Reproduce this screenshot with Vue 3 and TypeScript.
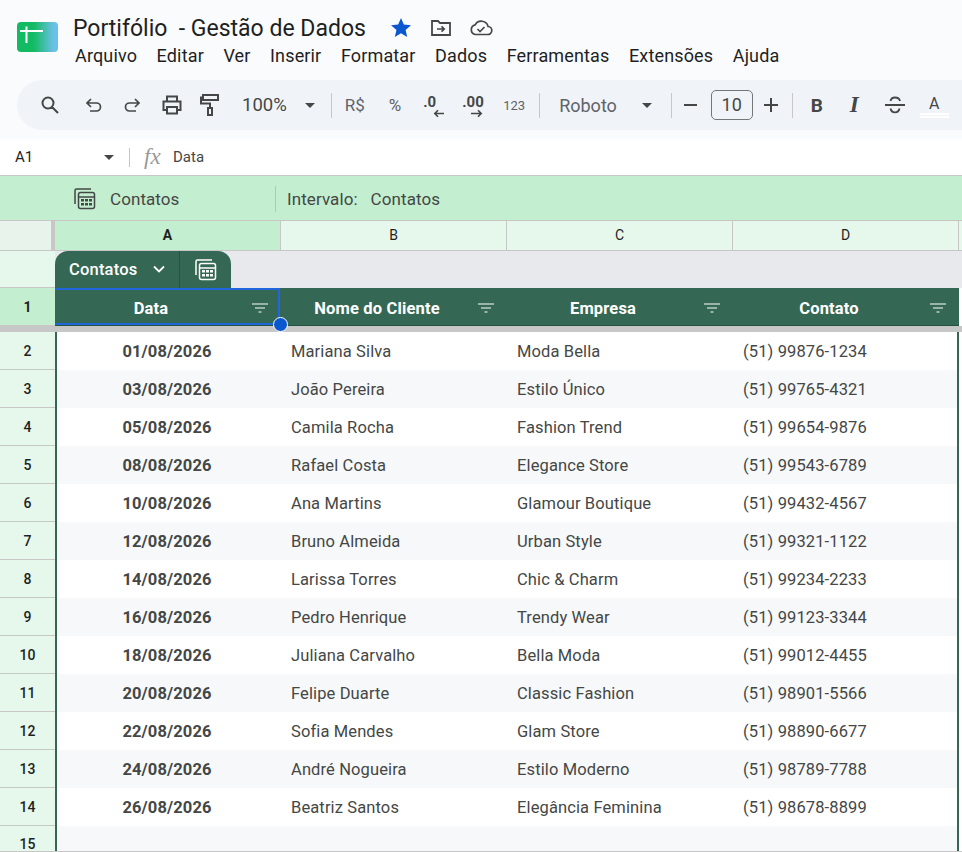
<script setup lang="ts">
const menus = ['Arquivo', 'Editar', 'Ver', 'Inserir', 'Formatar', 'Dados', 'Ferramentas', 'Extensões', 'Ajuda']
const columns = ['A', 'B', 'C', 'D']
const headers = ['Data', 'Nome do Cliente', 'Empresa', 'Contato']
const rows = [
  ['01/08/2026', 'Mariana Silva', 'Moda Bella', '(51) 99876-1234'],
  ['03/08/2026', 'João Pereira', 'Estilo Único', '(51) 99765-4321'],
  ['05/08/2026', 'Camila Rocha', 'Fashion Trend', '(51) 99654-9876'],
  ['08/08/2026', 'Rafael Costa', 'Elegance Store', '(51) 99543-6789'],
  ['10/08/2026', 'Ana Martins', 'Glamour Boutique', '(51) 99432-4567'],
  ['12/08/2026', 'Bruno Almeida', 'Urban Style', '(51) 99321-1122'],
  ['14/08/2026', 'Larissa Torres', 'Chic & Charm', '(51) 99234-2233'],
  ['16/08/2026', 'Pedro Henrique', 'Trendy Wear', '(51) 99123-3344'],
  ['18/08/2026', 'Juliana Carvalho', 'Bella Moda', '(51) 99012-4455'],
  ['20/08/2026', 'Felipe Duarte', 'Classic Fashion', '(51) 98901-5566'],
  ['22/08/2026', 'Sofia Mendes', 'Glam Store', '(51) 98890-6677'],
  ['24/08/2026', 'André Nogueira', 'Estilo Moderno', '(51) 98789-7788'],
  ['26/08/2026', 'Beatriz Santos', 'Elegância Feminina', '(51) 98678-8899'],
]
</script>

<template>
  <div class="page">
    <header class="top">
      <div class="title-row">
        <svg class="logo" width="42" height="30" viewBox="0 0 42 30">
          <defs>
            <linearGradient id="logoFill" x1="0" x2="1" y1="0" y2="0">
              <stop offset="0.4" stop-color="#12bb62" />
              <stop offset="0.9" stop-color="#6cc0e8" />
            </linearGradient>
          </defs>
          <rect x="0" y="0" width="41" height="30" rx="4" fill="url(#logoFill)" />
          <path d="M3 9h23M9.500 4.500V21" stroke="#fff" stroke-width="2" fill="none" />
        </svg>
        <div class="titles">
          <div class="name-line">
            <span class="doc-name">Portifólio&nbsp; - Gestão de Dados</span>
            <svg class="star" width="24" height="24" viewBox="0 0 24 24"><path fill="#0b57d0" d="M12 17.300l6.200 3.700-1.600-7L22 9.200l-7.200-.6L12 2 9.200 8.600 2 9.200 7.500 14l-1.700 7z" /></svg>
            <svg class="folder" width="22" height="20" viewBox="0 0 22 20"><path fill="none" stroke="#444746" stroke-width="1.800" d="M2 3h6l2 2h10v12H2z" /><path fill="none" stroke="#444746" stroke-width="1.600" d="M7 11h7M11.500 8.300l2.800 2.700-2.800 2.700" /></svg>
            <svg class="cloud" width="24" height="20" viewBox="0 0 24 20"><path fill="none" stroke="#444746" stroke-width="1.700" d="M6 16.500h12.500a4 4 0 0 0 .6-8A7 7 0 0 0 6.200 6.800 5 5 0 0 0 6 16.500z" /><path fill="none" stroke="#444746" stroke-width="1.600" d="M8.500 11l2.500 2.500 4.500-4.500" /></svg>
          </div>
          <nav class="menus">
            <span v-for="m in menus" :key="m">{{ m }}</span>
          </nav>
        </div>
      </div>
      <div class="toolbar">
        <svg class="ic s1" width="22" height="22" viewBox="0 0 22 22"><path fill="none" stroke="#444746" stroke-width="2" d="M9 3.500a5.500 5.500 0 1 0 0 11 5.500 5.500 0 0 0 0-11zM13 13l6 6" /></svg>
        <svg class="ic s2" width="20" height="20" viewBox="0 0 20 20"><path fill="none" stroke="#444746" stroke-width="1.700" d="M7 4L3 8l4 4M3 8h9.500a4 4 0 0 1 0 8H6" /></svg>
        <svg class="ic s3" width="20" height="20" viewBox="0 0 20 20"><path fill="none" stroke="#444746" stroke-width="1.700" d="M13 4l4 4-4 4M17 8H7.500a4 4 0 0 0 0 8H14" /></svg>
        <svg class="ic s4" width="22" height="22" viewBox="0 0 22 22"><path fill="none" stroke="#444746" stroke-width="2" d="M6 7V2.500h10V7M6 16H2.500V7.500h17V16H16M6 13h10v6.500H6z" /></svg>
        <svg class="ic s5" width="20" height="24" viewBox="0 0 20 24"><path fill="none" stroke="#444746" stroke-width="2" d="M3 2h15v5H3zM3 4.500H1v6h9v4M8 15h4v7H8z" /></svg>
        <span class="zoom">100%</span>
        <i class="caret c1"></i>
        <i class="sep m20"></i>
        <span class="tool-txt rs">R$</span>
        <span class="tool-txt pct">%</span>
        <span class="dec d1">.0<svg width="11" height="9" viewBox="0 0 11 9"><path fill="none" stroke="#444746" stroke-width="1.600" d="M11 4.500H2M5 1.200L1.800 4.500 5 7.800" /></svg></span>
        <span class="dec d2">.00<svg width="12" height="9" viewBox="0 0 12 9"><path fill="none" stroke="#444746" stroke-width="1.600" d="M0 4.500h10M7 1.200l3.200 3.300L7 7.800" /></svg></span>
        <span class="num-123">123</span>
        <i class="sep m14"></i>
        <span class="font-name">Roboto</span>
        <i class="caret c2"></i>
        <i class="sep m19"></i>
        <svg class="ic minus" width="13" height="14" viewBox="0 0 13 14"><path stroke="#444746" stroke-width="2" d="M0 7h13" /></svg>
        <span class="size-box">10</span>
        <svg class="ic plus" width="14" height="14" viewBox="0 0 14 14"><path stroke="#444746" stroke-width="2" d="M0 7h14M7 0v14" /></svg>
        <i class="sep m14"></i>
        <span class="bold-b">B</span>
        <span class="ital-i">I</span>
        <svg class="ic strike" width="20" height="18" viewBox="0 0 20 18"><path fill="none" stroke="#444746" stroke-width="1.800" d="M0 9h20M15 5c-.5-2.500-2.500-3.500-5-3.500S6 2.500 5.500 5M5.500 12.500c.5 2.500 2.500 3.800 4.500 3.800s4-1.300 4.500-3.800" /></svg>
        <span class="color-a">A</span>
      </div>
    </header>

    <div class="formula">
      <span class="cell-ref">A1</span>
      <i class="caret dark"></i>
      <i class="sep short"></i>
      <span class="fx">fx</span>
      <span class="formula-val">Data</span>
    </div>

    <div class="range-bar">
      <div class="range-left">
        <svg width="22" height="22" viewBox="0 0 22 22"><path fill="none" stroke="#444746" stroke-width="1.500" d="M1 16V2.500a1.500 1.500 0 0 1 1.500-1.500H17" /><rect x="4.500" y="4.500" width="16" height="16" rx="2" fill="none" stroke="#444746" stroke-width="1.500" /><path stroke="#444746" stroke-width="1.500" d="M5 9h15" /><path fill="#444746" d="M7 11h3v2.500H7zM11 11h3v2.500h-3zM15 11h3v2.500h-3zM7 15h3v2.500H7zM11 15h3v2.500h-3zM15 15h3v2.500h-3z" /></svg>
        <span>Contatos</span>
      </div>
      <div class="range-right"><span>Intervalo:</span><span>Contatos</span></div>
    </div>

    <div class="grid col-heads">
      <div class="corner"></div>
      <div v-for="(c, i) in columns" :key="c" class="col-head" :class="{ active: i === 0 }">{{ c }}</div>
      <div class="col-rest"></div>
    </div>

    <div class="grid tab-row">
      <div class="row-head blank"></div>
      <div class="tab-area">
        <div class="tab">
          <span class="tab-name">Contatos</span>
          <svg width="14" height="9" viewBox="0 0 14 9"><path fill="none" stroke="#fff" stroke-width="1.800" d="M2 1.500l5 5 5-5" /></svg>
          <i class="tab-sep"></i>
          <svg width="22" height="22" viewBox="0 0 22 22"><path fill="none" stroke="#fff" stroke-width="1.500" d="M1 16V2.500a1.500 1.500 0 0 1 1.500-1.500H17" /><rect x="4.500" y="4.500" width="16" height="16" rx="2" fill="none" stroke="#fff" stroke-width="1.500" /><path stroke="#fff" stroke-width="1.500" d="M5 9h15" /><path fill="#fff" d="M7 11h3v2.500H7zM11 11h3v2.500h-3zM15 11h3v2.500h-3zM7 15h3v2.500H7zM11 15h3v2.500h-3zM15 15h3v2.500h-3z" /></svg>
        </div>
      </div>
    </div>

    <div class="grid head-row">
      <div class="row-head on">1</div>
      <div v-for="(h, i) in headers" :key="h" class="th" :class="{ selected: i === 0 }">
        <span class="th-text">{{ h }}</span>
        <svg class="filter" width="18" height="12" viewBox="0 0 18 12"><path stroke="#b9ccc3" stroke-width="1.500" d="M1 2h16M4 6h10M7.500 10h3" /></svg>
        <i v-if="i === 0" class="sel-box"></i>
        <i v-if="i === 0" class="handle"></i>
      </div>
    </div>
    <div class="freeze"></div>

    <div class="body">
      <div v-for="(r, i) in rows" :key="r[0]" class="grid row" :class="{ alt: i % 2 === 1 }">
        <div class="row-head">{{ i + 2 }}</div>
        <div class="td date">{{ r[0] }}</div>
        <div class="td">{{ r[1] }}</div>
        <div class="td">{{ r[2] }}</div>
        <div class="td">{{ r[3] }}</div>
      </div>
      <div class="grid row last alt">
        <div class="row-head">15</div>
        <div class="td"></div><div class="td"></div><div class="td"></div><div class="td"></div>
      </div>
    </div>
  </div>
</template>

<style scoped>
.page {
  width: 962px;
  height: 852px;
  overflow: hidden;
  box-sizing: border-box;
  border-bottom: 1px solid #c7c7c7;
  background: #fff;
  font-family: Roboto, "Liberation Sans", sans-serif;
  color: #444746;
}
i { display: block; font-style: normal; }

.top {
  height: 139px;
  background: #f9fbfd;
  padding: 13px 0 0 17px;
  box-sizing: border-box;
}
.title-row { display: flex; height: 67px; margin-bottom: -1px; }
.logo { margin-top: 9px; }
.titles { margin-left: 14px; }
.name-line { display: flex; align-items: center; height: 30px; }
.doc-name { font-size: 23px; color: #1f1f1f; white-space: nowrap; }
.star { margin-left: 23px; }
.folder { margin-left: 17px; }
.cloud { margin-left: 17px; }
.menus { display: flex; gap: 19.500px; margin: 2px 0 0 2px; font-size: 18px; letter-spacing: .15px; color: #1f1f1f; }

.toolbar {
  display: flex;
  align-items: center;
  height: 50px;
  width: 960px;
  margin-top: 1px;
  background: #f0f4f9;
  border-radius: 25px 0 0 25px;
  white-space: nowrap;
}
.ic { flex: none; }
.s1 { margin-left: 22px; }
.s2 { margin-left: 23px; }
.s3 { margin-left: 18px; }
.s4 { margin-left: 19px; }
.s5 { margin-left: 17px; }
.caret {
  flex: none;
  width: 0;
  height: 0;
  border-left: 5.500px solid transparent;
  border-right: 5.500px solid transparent;
  border-top: 5.500px solid #444746;
}
.c1 { margin-left: 18px; }
.c2 { margin-left: 18.500px; }
.sep { flex: none; width: 1px; height: 25px; background: #c7c7c7; }
.m20 { margin-left: 16px; }
.m14 { margin-left: 14px; }
.m19 { margin-left: 19px; }
.zoom { margin-left: 22px; font-size: 18.500px; }
.tool-txt { font-size: 17px; color: #5f6368; }
.rs { margin-left: 13px; }
.pct { margin-left: 24px; }
.dec {
  display: inline-flex;
  flex-direction: column;
  align-items: flex-start;
  width: 21px;
  height: 22px;
  margin-top: 3px;
  font-size: 15px;
  font-weight: 700;
  line-height: 13px;
}
.dec svg { align-self: flex-end; }
.d1 { margin-left: 22px; }
.d2 { margin-left: 18px; }
.num-123 { margin-left: 20px; font-size: 13px; color: #5f6368; }
.font-name { margin-left: 19px; font-size: 18px; color: #5f6368; width: 64px; }
.minus { margin-left: 12px; }
.plus { margin-left: 11px; }
.size-box {
  flex: none;
  width: 42px;
  height: 30px;
  margin-left: 14px;
  box-sizing: border-box;
  border: 1px solid #747775;
  border-radius: 5px;
  text-align: center;
  font-size: 18px;
  line-height: 28px;
}
.bold-b { margin-left: 18px; font-size: 19px; font-weight: 700; }
.ital-i { margin-left: 27px; font-family: "Liberation Serif", serif; font-size: 23px; font-weight: 700; font-style: italic; }
.strike { margin-left: 26px; }
.color-a {
  align-self: flex-start;
  margin: 16px 0 0 15px;
  width: 29px;
  padding-bottom: 1px;
  text-align: center;
  font-size: 16px;
  line-height: 16px;
  border-bottom: 5px double #fff;
}

.formula {
  display: flex;
  align-items: center;
  height: 36px;
  background: #fff;
  border-bottom: 1px solid #c7c7c7;
}
.cell-ref { width: 89px; padding-left: 15px; font-size: 15px; color: #1f1f1f; }
.caret.dark { margin-right: 15px; }
.sep.short { height: 19px; }
.fx { margin-left: 14px; font-family: "Liberation Serif", serif; font-style: italic; font-size: 23px; color: #999; width: 29px; }
.formula-val { font-size: 15px; }

.range-bar {
  display: flex;
  align-items: center;
  height: 42px;
  padding-top: 2px;
  background: #c3eecf;
  border-bottom: 1px solid #c7c7c7;
  font-size: 17px;
  letter-spacing: .08px;
}
.range-left {
  display: flex;
  align-items: center;
  gap: 14px;
  width: 201px;
  height: 26px;
  margin-left: 74px;
  border-right: 1px solid #b0c9b8;
}
.range-right { display: flex; gap: 13px; margin-left: 11px; }

.grid { display: grid; grid-template-columns: 55px repeat(4, 226px) 3px; }
.col-heads { height: 30px; }
.corner { background: #e8f3ec; border-right: 4px solid #c7c7c7; border-bottom: 1px solid #c7c7c7; }
.col-head {
  background: #e6f7ec;
  border-right: 1px solid #c7c7c7;
  border-bottom: 1px solid #c7c7c7;
  text-align: center;
  font-size: 14px;
  line-height: 29px;
  color: #1f1f1f;
}
.col-head.active { background: #c3eecf; font-weight: 700; }
.col-rest { background: #e6f7ec; border-bottom: 1px solid #c7c7c7; }

.tab-row { height: 37px; }
.tab-area { grid-column: 2 / 7; background: #e8e9ed; }
.row-head {
  background: #e6f7ec;
  border-bottom: 1px solid #c7c7c7;
  box-sizing: border-box;
  padding-top: 1px;
  text-align: center;
  font-size: 14px;
  line-height: 36px;
  color: #1f1f1f;
  font-weight: 500;
}
.row-head.on { background: #c3eecf; font-weight: 700; }
.tab {
  display: flex;
  align-items: center;
  width: 176px;
  height: 37px;
  background: #356854;
  border-radius: 13px 13px 0 0;
  color: #fff;
  box-sizing: border-box;
  padding-left: 14px;
}
.tab-name { font-size: 16.500px; letter-spacing: .2px; font-weight: 500; margin-right: 15px; }
.tab-sep { width: 1px; height: 37px; background: #24533f; margin: 0 15px 0 13px; }

.head-row { height: 38px; }
.th {
  position: relative;
  display: flex;
  align-items: center;
  padding-top: 3px;
  background: #356854;
  color: #fff;
  font-size: 16.500px;
  letter-spacing: .15px;
  font-weight: 700;
  border-bottom: 1px solid #24533f;
  box-sizing: border-box;
}
.th-text { flex: 1; text-align: center; padding-right: 4px; }
.filter { margin-right: 12px; flex: none; }
.sel-box {
  position: absolute;
  left: 0;
  top: 0;
  right: 1px;
  bottom: 0;
  border: solid #2166dd;
  border-width: 2px 2px 2px 0;
  box-sizing: border-box;
}
.handle {
  position: absolute;
  right: -7px;
  bottom: -7px;
  width: 13px;
  height: 13px;
  z-index: 1;
  background: #0b57d0;
  border: 1px solid #fff;
  border-radius: 50%;
}
.freeze { height: 6px; background: #c7c7c7; }

.row { height: 38px; }
.td {
  background: #fff;
  box-sizing: border-box;
  padding: 2px 0 0 10px;
  font-size: 16.500px;
  letter-spacing: .12px;
  line-height: 36px;
  color: #444746;
  white-space: nowrap;
}
.row .td:nth-child(2) { border-left: 2px solid #356854; }
.row .td:nth-child(5) { border-right: 2px solid #356854; }
.alt .td { background: #f6f8f9; }
.td.date { text-align: center; font-weight: 700; padding: 2px 4px 0 0; }
.row.last { height: 25px; }
.row.last .row-head { padding-top: 11px; line-height: 14px; }
</style>

<style>
html, body { margin: 0; background: #fff; }
</style>
